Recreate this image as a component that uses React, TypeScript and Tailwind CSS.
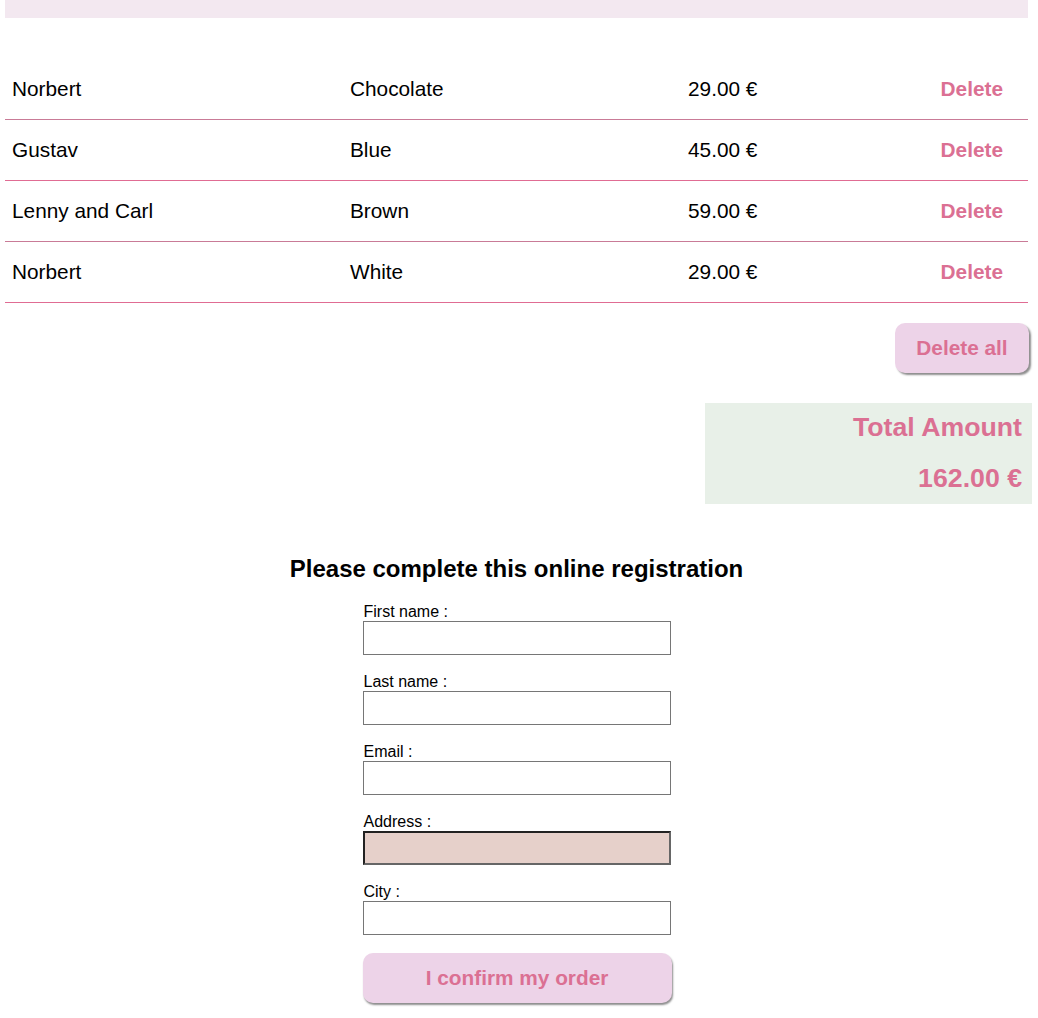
const ORDERS = [
  { name: 'Norbert', color: 'Chocolate', price: '29.00 €', line: 'border-[#c97b97]' },
  { name: 'Gustav', color: 'Blue', price: '45.00 €', line: 'border-[#e06c93]' },
  { name: 'Lenny and Carl', color: 'Brown', price: '59.00 €', line: 'border-[#c97b97]' },
  { name: 'Norbert', color: 'White', price: '29.00 €', line: 'border-[#e06c93]' },
];

const FIELDS = ['First name :', 'Last name :', 'Email :', 'Address :', 'City :'];

export default function App() {
  return (
    <div className="min-h-screen bg-white pl-[5px] pr-[10px] pb-4 text-black" style={{ fontFamily: '"Liberation Sans", Arial, sans-serif' }}>
      <div className="h-[18px] bg-[#f3e8f0]" />

      <div className="mt-[41px]">
        {ORDERS.map((o, i) => (
          <div key={i} className={`flex h-[61px] items-center border-b ${o.line} text-[20.8px]`}>
            <div className="w-[338px] pl-[7px]">{o.name}</div>
            <div className="w-[338px] pl-[7px]">{o.color}</div>
            <div className="flex-1 pl-[7px]">{o.price}</div>
            <button className="pr-[25px] font-bold text-[#db7093]">Delete</button>
          </div>
        ))}
      </div>

      <div className="mt-[20px] flex justify-end">
        <button className="mr-[-1px] h-[50px] w-[134px] rounded-[10px] bg-[#edd3e8] text-[20.8px] font-bold text-[#db7093] shadow-[2px_2px_2px_rgba(0,0,0,0.45)]">
          Delete all
        </button>
      </div>

      <div className="mt-[30px] flex justify-end">
        <div className="mr-[-4px] flex h-[101px] w-[327px] flex-col items-end justify-center bg-[#e8f0e8] pr-[10px] pb-[2px] text-[26.7px] font-bold leading-[30px] text-[#db7093]">
          <div>Total Amount</div>
          <div className="mt-[21px]">162.00 €</div>
        </div>
      </div>

      <h2 className="mt-[51px] text-center text-[24px] font-bold leading-[28px]">Please complete this online registration</h2>

      <form className="mx-auto mt-[20px] flex w-[308px] flex-col" onSubmit={e => e.preventDefault()}>
        {FIELDS.map((f, i) => (
          <div key={f} className="mb-[18px] flex flex-col">
            <label className="pl-px text-[16px] leading-[18px]">{f}</label>
            <input
              className={
                i === 3
                  ? 'h-[34px] w-[308px] border-2 border-t-[#222] border-l-[#222] border-r-[#666] border-b-[#666] bg-[#e6d0ca] outline-none'
                  : 'h-[34px] w-[308px] border border-[#767676] bg-white outline-none'
              }
            />
          </div>
        ))}
        <button className="h-[50px] w-[309px] rounded-[10px] bg-[#edd3e8] text-[20.8px] font-bold text-[#db7093] shadow-[1px_2px_2px_rgba(0,0,0,0.45)]">
          I confirm my order
        </button>
      </form>
    </div>
  );
}
